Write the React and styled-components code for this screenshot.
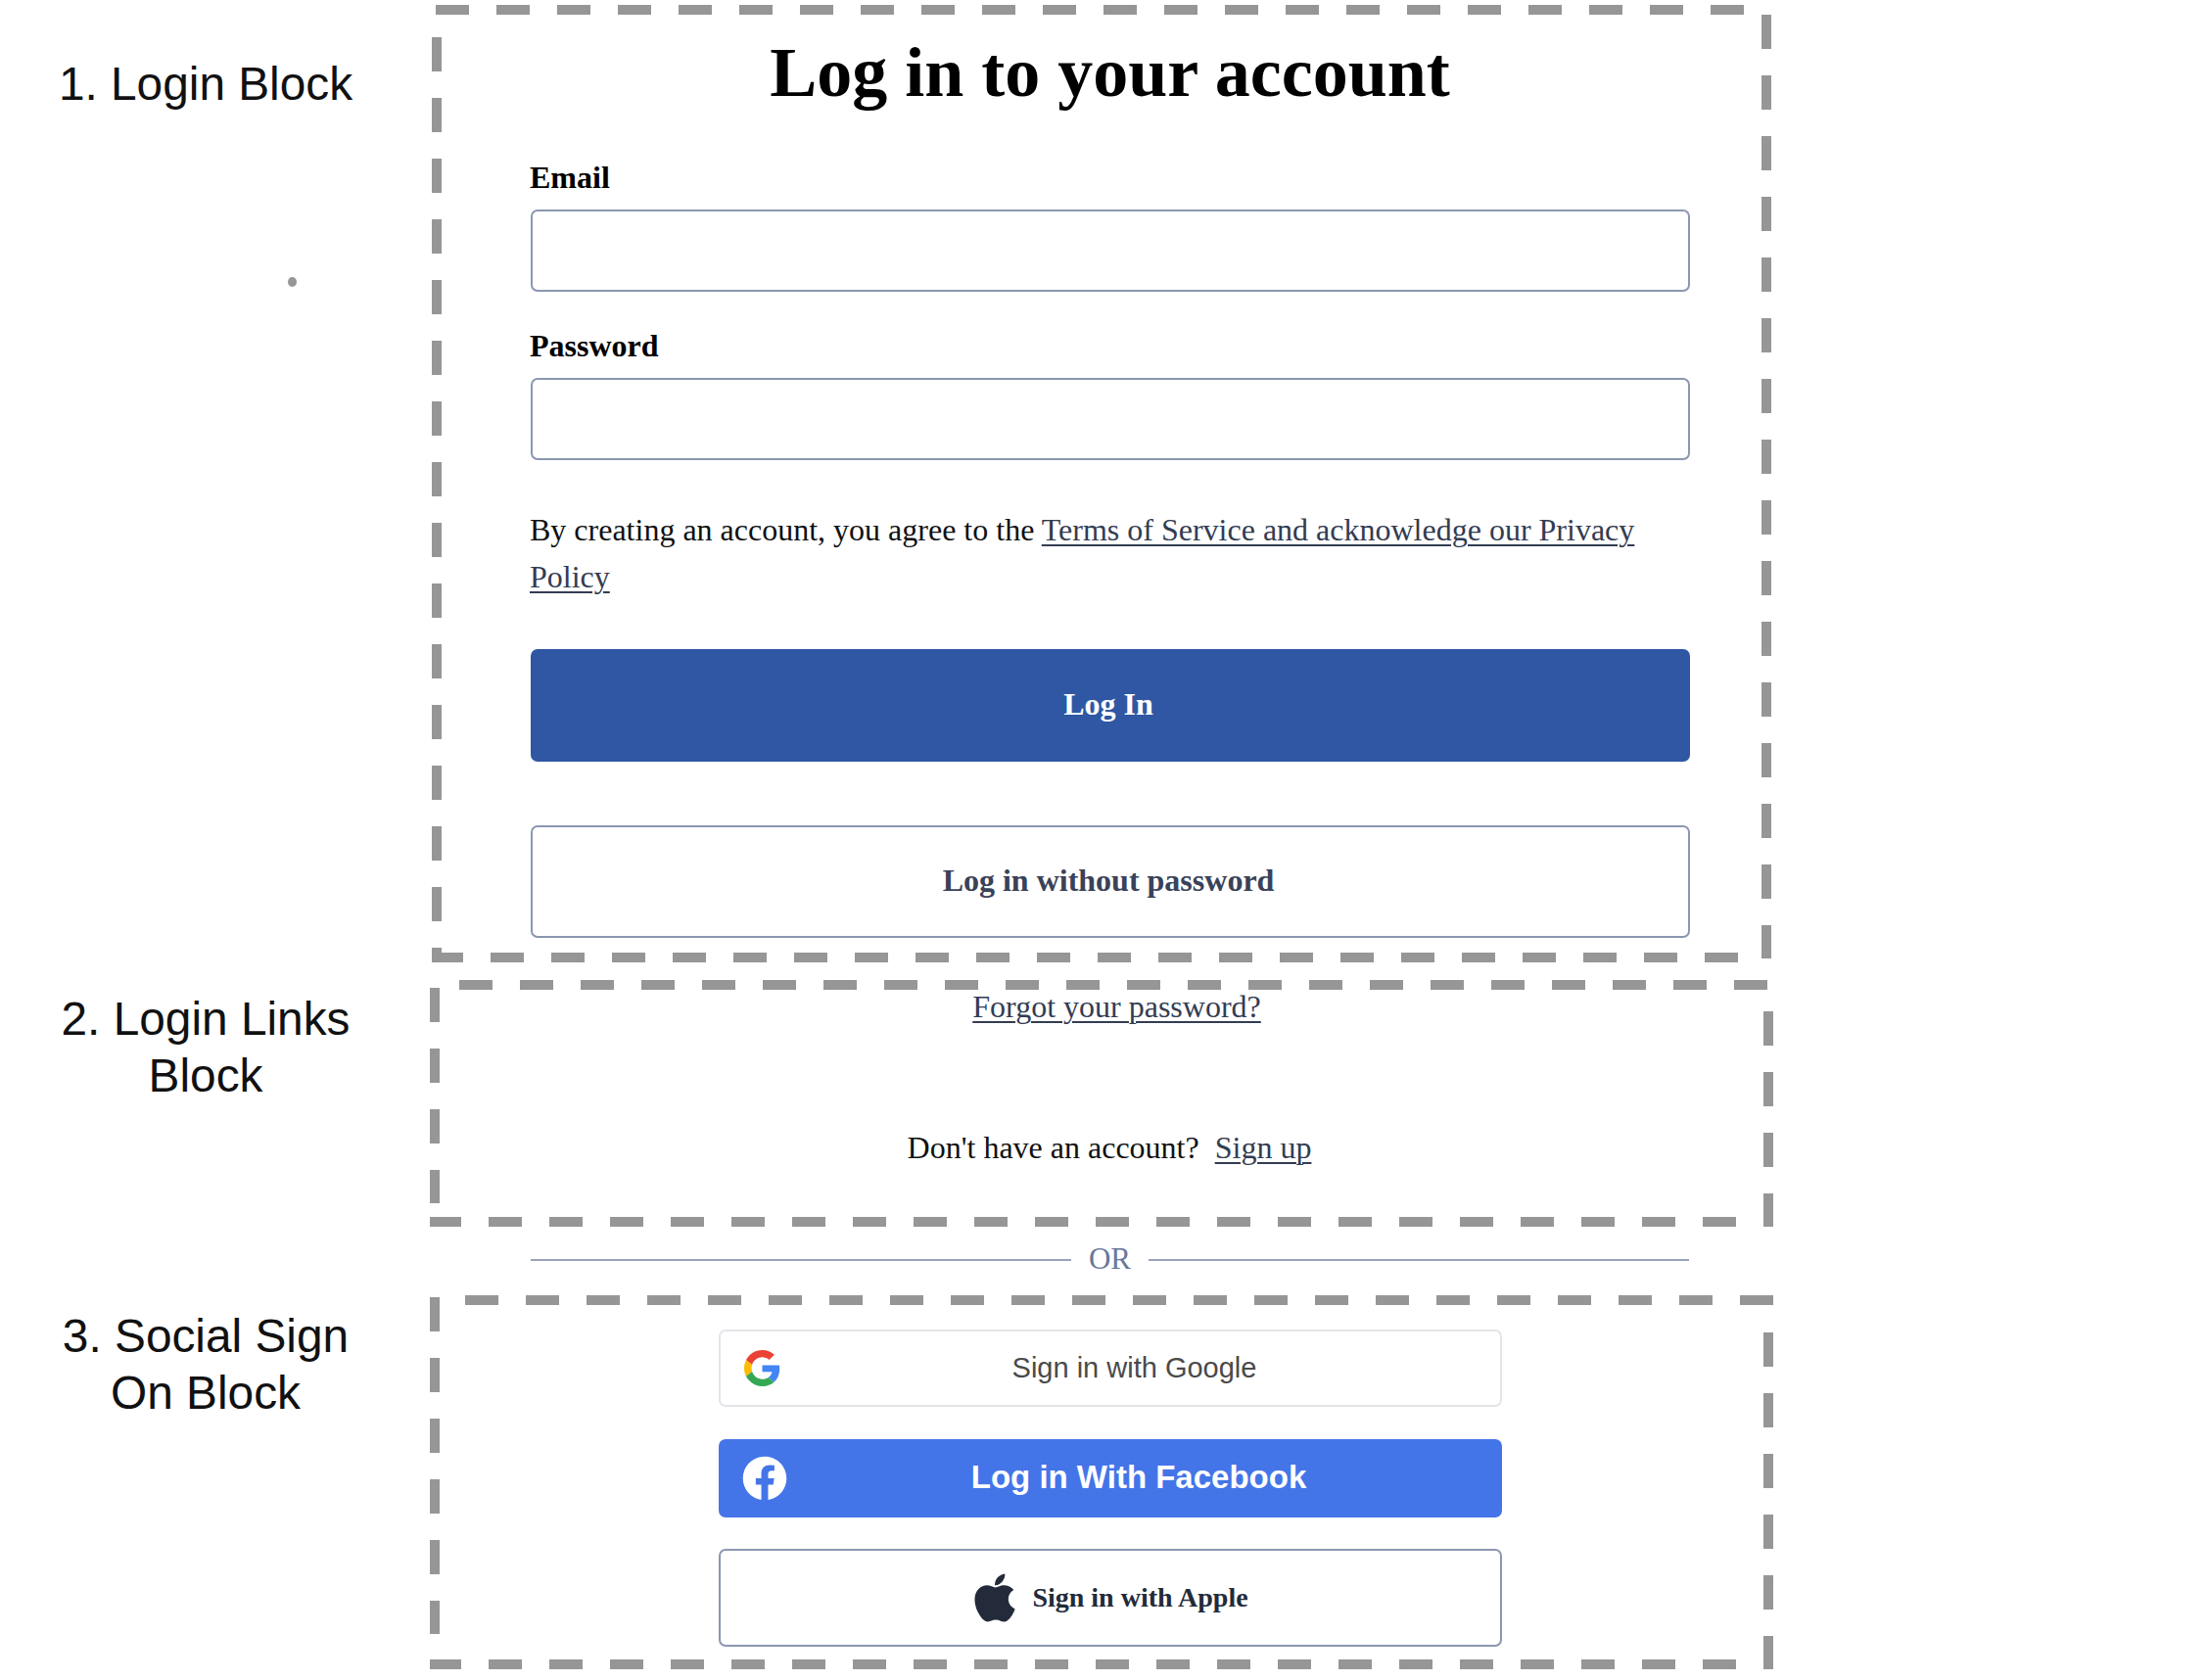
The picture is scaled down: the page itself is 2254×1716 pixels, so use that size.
import React from 'react';
import styled, { createGlobalStyle } from 'styled-components';
import { FaApple, FaFacebook } from 'react-icons/fa';

const dashColor = '#969696';
const fieldBorder = '#8b97b1';
const serif = '"Liberation Serif", serif';
const sans = '"Liberation Sans", sans-serif';

const GlobalStyle = createGlobalStyle`
    html, body {
        margin: 0;
        background: #fff;
        font-family: ${serif};
    }
`;

const Page = styled.main`
    display: grid;
    grid-template-columns: 439px 1372px;
    width: 2254px;
    height: 1716px;
    padding-top: 5px;
    box-sizing: border-box;
    align-content: start;
`;

const Note = styled.div`
    position: relative;
    width: 420px;
    padding-top: ${props => props.$top}px;
    font-family: ${sans};
    font-size: 47.8px;
    line-height: 57.5px;
    color: #111;
    text-align: center;
`;

const Speck = styled.span`
    position: absolute;
    left: 294px;
    top: 278px;
    width: 9px;
    height: 10px;
    border-radius: 50%;
    background: ${dashColor};
`;

const Frame = styled.section`
    position: relative;
    box-sizing: border-box;
    height: ${props => props.$height}px;
    margin: ${props => props.$margin || '0'};
`;

// one side of a dashed annotation box, trimmed to the part that shows in the picture
const Dash = styled.i`
    position: absolute;
    display: block;
    ${props =>
        props.$side === 'top' || props.$side === 'bottom'
            ? `
        ${props.$side}: 0;
        left: ${props.$start}px;
        width: ${props.$end - props.$start}px;
        height: 10px;
        background-image: linear-gradient(to right, ${dashColor} 34px, transparent 34px);
        background-size: 62px 100%;
        background-position: ${props.$phase || 0}px 0;
    `
            : `
        ${props.$side}: 0;
        top: ${props.$start}px;
        height: ${props.$end - props.$start}px;
        width: 10px;
        background-image: linear-gradient(to bottom, ${dashColor} 35px, transparent 35px);
        background-size: 100% 62px;
    `}
`;

const LoginForm = styled.form`
    display: flex;
    flex-direction: column;
    box-sizing: border-box;
    height: 100%;
    padding: 32px 83px 0 100px;
`;

const Title = styled.h1`
    margin: 0 0 52px;
    font-size: 72px;
    line-height: 74px;
    font-weight: 700;
    color: #000;
    text-align: center;
`;

const Label = styled.label`
    font-size: 32px;
    line-height: 36px;
    font-weight: 700;
    color: #000;
`;

const Input = styled.input`
    display: block;
    box-sizing: border-box;
    width: calc(100% - 1px);
    height: 84px;
    margin: 15px 0 37px 1px;
    border: 2px solid ${fieldBorder};
    border-radius: 7px;
    background: #fff;
`;

const Legal = styled.p`
    margin: 11px 0 50px;
    font-size: 32px;
    line-height: 47.5px;
    color: #111;
`;

const TextLink = styled.a`
    color: #333c52;
    text-decoration: underline;
    text-decoration-thickness: 2px;
    text-underline-offset: 4px;
`;

const PrimaryButton = styled.button`
    height: 115px;
    margin: 0 0 65px 1px;
    padding: 0 4px 3px 0;
    border: 0;
    border-radius: 7px;
    background: #2f57a4;
    color: #fff;
    font-family: ${serif};
    font-size: 32px;
    font-weight: 700;
`;

const OutlineButton = styled.button`
    height: 115px;
    margin-left: 1px;
    padding: 0 4px 3px 0;
    border: 2px solid ${fieldBorder};
    border-radius: 7px;
    background: #fff;
    color: #3a4258;
    font-family: ${serif};
    font-size: 32px;
    font-weight: 700;
`;

const LinksBlock = styled.div`
    display: flex;
    flex-direction: column;
    align-items: center;
    padding: 4px 0 0 16px;
    font-size: 32px;
    line-height: 47px;
    color: #111;
`;

const Forgot = styled(TextLink)`
    margin: 0 0 97px 15px;
`;

const SignUpRow = styled.div`
    white-space: pre;
`;

const Divider = styled.div`
    grid-column: 2;
    display: flex;
    align-items: center;
    gap: 18px;
    height: 68px;
    padding-bottom: 2px;
    margin: 0 86px 0 103px;
    font-size: 31px;
    color: #68779a;
`;

const OrLabel = styled.span`
    padding-bottom: 2px;
`;

const Rule = styled.span`
    flex: 1;
    height: 2px;
    background: #98a3ba;
`;

const SocialList = styled.div`
    display: flex;
    flex-direction: column;
    width: 800px;
    padding: 35px 0 0 295px;
`;

const SocialButton = styled.button`
    display: flex;
    align-items: center;
    box-sizing: border-box;
    width: 100%;
    height: ${props => props.$height}px;
    margin-bottom: ${props => props.$gap || 0}px;
    padding: 0 12px 0 24px;
    border: ${props => props.$border};
    border-radius: 7px;
    background: ${props => props.$bg};
`;

const SocialText = styled.span`
    flex: 1;
    padding-bottom: ${props => props.$lift || 0}px;
    text-align: center;
    color: ${props => props.$color};
    font-family: ${sans};
    font-size: ${props => props.$size}px;
    font-weight: ${props => props.$weight};
`;

const AppleRow = styled.span`
    display: flex;
    align-items: center;
    justify-content: center;
    flex: 1;
    gap: 10px;
    margin-right: 17px;
    color: #232b3a;
    font-size: 28px;
    font-weight: 700;
    font-family: ${serif};
`;

const GoogleIcon = () => (
    <svg width="37" height="37" viewBox="0 0 48 48">
        <path fill="#EA4335" d="M24 9.5c3.54 0 6.71 1.22 9.21 3.6l6.85-6.85C35.9 2.38 30.47 0 24 0 14.62 0 6.51 5.38 2.56 13.22l7.98 6.19C12.43 13.72 17.74 9.5 24 9.5z" />
        <path fill="#4285F4" d="M46.98 24.55c0-1.57-.15-3.09-.38-4.55H24v9.02h12.94c-.58 2.96-2.26 5.48-4.78 7.18l7.73 6c4.51-4.18 7.09-10.36 7.09-17.65z" />
        <path fill="#FBBC05" d="M10.53 28.59c-.48-1.45-.76-2.99-.76-4.59s.27-3.14.76-4.59l-7.98-6.19C.92 16.46 0 20.12 0 24c0 3.88.92 7.54 2.56 10.78l7.97-6.19z" />
        <path fill="#34A853" d="M24 48c6.48 0 11.93-2.13 15.89-5.81l-7.73-6c-2.15 1.45-4.92 2.3-8.16 2.3-6.26 0-11.57-4.22-13.47-9.91l-7.98 6.19C6.51 42.62 14.62 48 24 48z" />
    </svg>
);

function App() {
    return (
        <Page>
            <GlobalStyle />

            <Note $top={52}>
                1. Login Block
                <Speck />
            </Note>
            <Frame $height={978} $margin="0 2px">
                <Dash $side="top" $start={4} $end={1340} />
                <Dash $side="left" $start={33} $end={978} />
                <Dash $side="right" $start={10} $end={974} />
                <Dash $side="bottom" $start={0} $end={1334} $phase={60} />
                <LoginForm>
                    <Title>Log in to your account</Title>
                    <Label htmlFor="email">Email</Label>
                    <Input id="email" type="email" />
                    <Label htmlFor="password">Password</Label>
                    <Input id="password" type="password" />
                    <Legal>
                        By creating an account, you agree to the{' '}
                        <TextLink href="#">Terms of Service and acknowledge our Privacy Policy</TextLink>
                    </Legal>
                    <PrimaryButton type="button">Log In</PrimaryButton>
                    <OutlineButton type="button">Log in without password</OutlineButton>
                </LoginForm>
            </Frame>

            <Note $top={18 + 11}>
                2. Login Links
                <br />
                Block
            </Note>
            <Frame $height={252} $margin="18px 0 0">
                <Dash $side="top" $start={30} $end={1366} />
                <Dash $side="left" $start={8} $end={228} />
                <Dash $side="right" $start={32} $end={252} />
                <Dash $side="bottom" $start={0} $end={1334} $phase={60} />
                <LinksBlock>
                    <Forgot href="#">Forgot your password?</Forgot>
                    <SignUpRow>
                        Don't have an account?{'  '}
                        <TextLink href="#">Sign up</TextLink>
                    </SignUpRow>
                </LinksBlock>
            </Frame>

            <Divider>
                <Rule />
                <OrLabel>OR</OrLabel>
                <Rule />
            </Divider>

            <Note $top={13}>
                3. Social Sign
                <br />
                On Block
            </Note>
            <Frame $height={382}>
                <Dash $side="top" $start={36} $end={1372} />
                <Dash $side="left" $start={2} $end={346} />
                <Dash $side="right" $start={38} $end={382} />
                <Dash $side="bottom" $start={0} $end={1334} $phase={60} />
                <SocialList>
                    <SocialButton type="button" $height={79} $gap={33} $border="2px solid #e4e5e9" $bg="#fff">
                        <GoogleIcon />
                        <SocialText $color="#4a4a4a" $size={29} $weight={400}>
                            Sign in with Google
                        </SocialText>
                    </SocialButton>
                    <SocialButton type="button" $height={80} $gap={32} $border="0" $bg="#4475e8">
                        <FaFacebook size={46} color="#fff" />
                        <SocialText $color="#fff" $size={33} $weight={700} $lift={2}>
                            Log in With Facebook
                        </SocialText>
                    </SocialButton>
                    <SocialButton type="button" $height={100} $border={`2px solid ${fieldBorder}`} $bg="#fff">
                        <AppleRow>
                            <FaApple size={56} />
                            Sign in with Apple
                        </AppleRow>
                    </SocialButton>
                </SocialList>
            </Frame>
        </Page>
    );
}

export default App;
